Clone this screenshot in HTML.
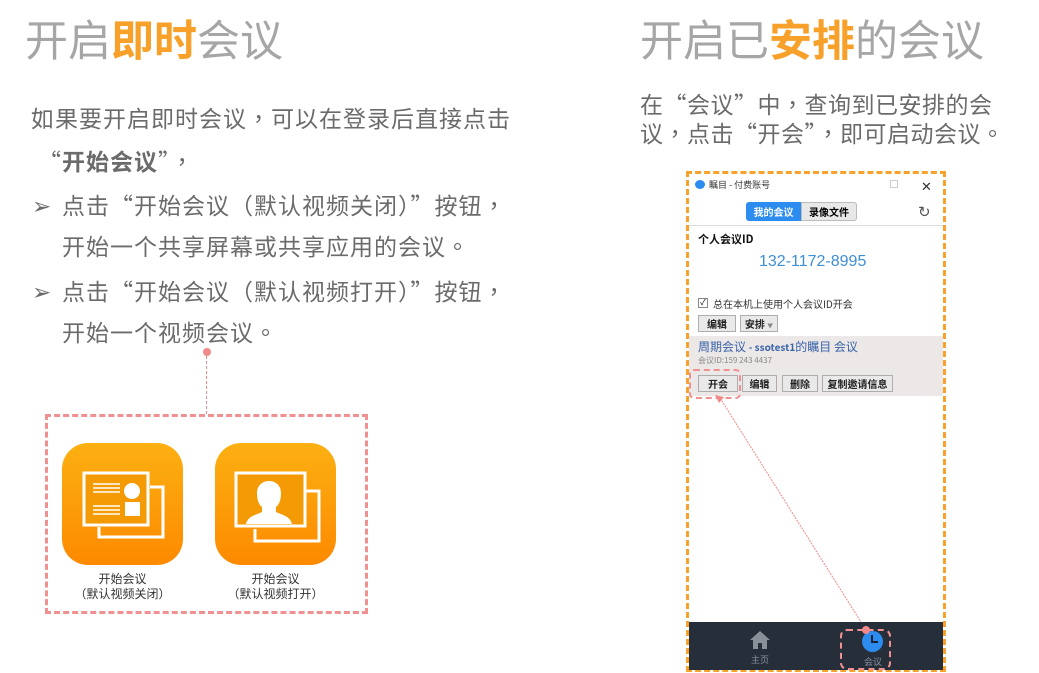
<!DOCTYPE html>
<html><head><meta charset="utf-8"><style>
*{margin:0;padding:0;box-sizing:border-box}
body{width:1039px;height:673px;background:#fff;position:relative;overflow:hidden;font-family:"Noto Sans CJK TC","Liberation Sans",sans-serif;}
.a{position:absolute;white-space:nowrap}
.t{font-size:43px;color:#a6a6a6;line-height:50px;font-family:"Liberation Sans","Noto Sans CJK SC",sans-serif}
.t b{color:#f7a02a;font-weight:bold}
.p{font-size:23px;color:#6b6b6b;line-height:30px;letter-spacing:1px}
.w{font-size:10px;color:#222}
.btn{position:absolute;height:17px;border:1px solid #adadad;background:#e9e9e9;font-size:10px;font-weight:bold;color:#222;text-align:center;line-height:15px}
.icon{position:absolute;width:121px;height:122px;border-radius:26px;background:linear-gradient(#fcb012,#fd8a00)}
</style></head><body>
<div class="a t" style="left:25px;top:17px">开启<b>即时</b>会议</div>
<div class="a p" style="left:31px;top:102px">如果要开启即时会议，可以在登录后直接点击</div>
<div class="a p" style="left:38px;top:145px">“<b style="color:#6b6b6b">开始会议</b>”，</div>
<div class="a p" style="left:32px;top:189px">➢</div>
<div class="a p" style="left:62px;top:189px">点击“开始会议（默认视频关闭）”按钮，</div>
<div class="a p" style="left:62px;top:230px">开始一个共享屏幕或共享应用的会议。</div>
<div class="a p" style="left:32px;top:275px">➢</div>
<div class="a p" style="left:62px;top:275px">点击“开始会议（默认视频打开）”按钮，</div>
<div class="a p" style="left:62px;top:316px">开始一个视频会议。</div>

<div class="a" style="left:203px;top:348px;width:8px;height:8px;border-radius:50%;background:#f08a8a"></div>
<div class="a" style="left:206px;top:356px;height:58px;border-left:1px dashed #f08a8a"></div>
<div class="a" style="left:45px;top:414px;width:323px;height:200px;border:3px dashed #f09090"></div>

<div class="icon" style="left:62px;top:443px">
<svg width="121" height="122" viewBox="0 0 121 122"><g fill="none" stroke="#fff" stroke-width="3"><path d="M88 44h13v50H37V84"/><rect x="22" y="30" width="64" height="52" fill="#f39a05"/></g>
<g stroke="#fff" stroke-width="1.5"><path d="M31 41h27M31 45h27M31 49h27M31 63h27M31 67h27M31 71h27"/></g>
<circle cx="70" cy="48" r="8" fill="#fff"/><rect x="63" y="59" width="15" height="14" fill="#fff"/></svg></div>
<div class="icon" style="left:215px;top:443px">
<svg width="121" height="122" viewBox="0 0 121 122"><g fill="none" stroke="#fff" stroke-width="3"><path d="M91 48h13v50H40V86"/><rect x="21" y="30" width="69" height="53" fill="#f39a05"/></g>
<path d="M31 81c2-8 10-9 16-12v-5c-4-3-5-9-5-14 0-7 5-12 12-12s12 5 12 12c0 5-1 11-5 14v5c6 3 14 4 16 12z" fill="#fff"/></svg></div>
<div class="a" style="left:62px;top:571px;width:121px;text-align:center;font-size:12px;color:#333;line-height:15px">开始会议<br>（默认视频关闭）</div>
<div class="a" style="left:215px;top:571px;width:121px;text-align:center;font-size:12px;color:#333;line-height:15px">开始会议<br>（默认视频打开）</div>

<div class="a t" style="left:640px;top:17px">开启已<b>安排</b>的会议</div>
<div class="a p" style="left:640px;top:89px;line-height:29px;letter-spacing:0.5px">在“会议”中，查询到已安排的会<br>议，点击“开会”，即可启动会议。</div>

<div class="a" style="left:686px;top:171px;width:260px;height:501px;border:3px dashed #f7a22c;background:#fff"></div>
<div class="a" style="left:695px;top:180px;width:10px;height:9px;border-radius:50%;background:#2d8cf0"></div>
<div class="a w" style="left:709px;top:178px;font-size:9px;color:#333">瞩目 - 付费账号</div>
<div class="a" style="left:890px;top:180px;width:8px;height:8px;border:1px solid #ccc"></div>
<div class="a" style="left:921px;top:176px;font-size:13px;color:#333">✕</div>
<div class="a" style="left:746px;top:202px;width:55px;height:19px;background:#2d8cf0;color:#fff;font-size:10px;font-weight:bold;text-align:center;line-height:19px;border-radius:3px 0 0 3px">我的会议</div>
<div class="a" style="left:801px;top:202px;width:56px;height:19px;background:#e8e8e8;border:1px solid #bbb;font-size:10px;font-weight:bold;text-align:center;line-height:17px;border-radius:0 3px 3px 0">录像文件</div>
<div class="a" style="left:918px;top:201px;font-size:15px;color:#555">↻</div>
<div class="a" style="left:689px;top:225px;width:254px;border-top:1px solid #ddd"></div>
<div class="a" style="left:698px;top:231px;font-size:11px;font-weight:bold;color:#111">个人会议ID</div>
<div class="a" style="left:759px;top:253px;font-size:16px;color:#3d8fd6;font-family:'Liberation Sans',sans-serif">132-1172-8995</div>
<div class="a" style="left:698px;top:298px;width:10px;height:10px;border:1px solid #888;font-size:8px;line-height:8px;text-align:center">✓</div>
<div class="a w" style="left:713px;top:296px;color:#333">总在本机上使用个人会议ID开会</div>
<div class="btn" style="left:698px;top:315px;width:38px">编辑</div>
<div class="btn" style="left:740px;top:315px;width:38px">安排 <span style="font-size:6px;color:#888">▼</span></div>
<div class="a" style="left:689px;top:336px;width:254px;height:60px;background:#ede8e8"></div>
<div class="a" style="left:698px;top:338px;font-size:12px;color:#3a64a8">周期会议 <span style="font-size:10px;font-weight:bold">- ssotest1</span>的瞩目 会议</div>
<div class="a" style="left:698px;top:355px;font-size:8px;color:#888">会议ID:159 243 4437</div>
<div class="btn" style="left:698px;top:375px;width:40px">开会</div>
<div class="btn" style="left:742px;top:375px;width:35px">编辑</div>
<div class="btn" style="left:782px;top:375px;width:36px">删除</div>
<div class="btn" style="left:822px;top:375px;width:71px">复制邀请信息</div>
<div class="a" style="left:689px;top:369px;width:52px;height:30px;border:2px dashed #f09090;border-radius:5px"></div>
<svg class="a" style="left:686px;top:390px" width="260" height="250"><line x1="34" y1="8" x2="180" y2="240" stroke="#f08a8a" stroke-width="1" stroke-dasharray="2 1"/><path d="M29 5l9 2-5 6z" fill="#f08a8a"/></svg>
<div class="a" style="left:689px;top:622px;width:254px;height:48px;background:#262e3a"></div>
<svg class="a" style="left:749px;top:630px" width="22" height="20"><path d="M11 1L1 10h3v9h5v-6h4v6h5v-9h3z" fill="#8a909a"/></svg>
<div class="a" style="left:751px;top:653px;font-size:9px;color:#8a909a">主页</div>
<div class="a" style="left:862px;top:631px;width:21px;height:21px;border-radius:50%;background:#2d8cf0"></div>
<svg class="a" style="left:862px;top:631px" width="21" height="21"><path d="M10 4v7h6" stroke="#1a2230" stroke-width="2" fill="none"/></svg>
<div class="a" style="left:864px;top:655px;font-size:9px;color:#8a909a">会议</div>
<div class="a" style="left:840px;top:629px;width:51px;height:41px;border:2px dashed #f09090;border-radius:7px"></div>
<div class="a" style="left:862px;top:626px;width:8px;height:8px;border-radius:50%;background:#f08a8a"></div>
</body></html>
